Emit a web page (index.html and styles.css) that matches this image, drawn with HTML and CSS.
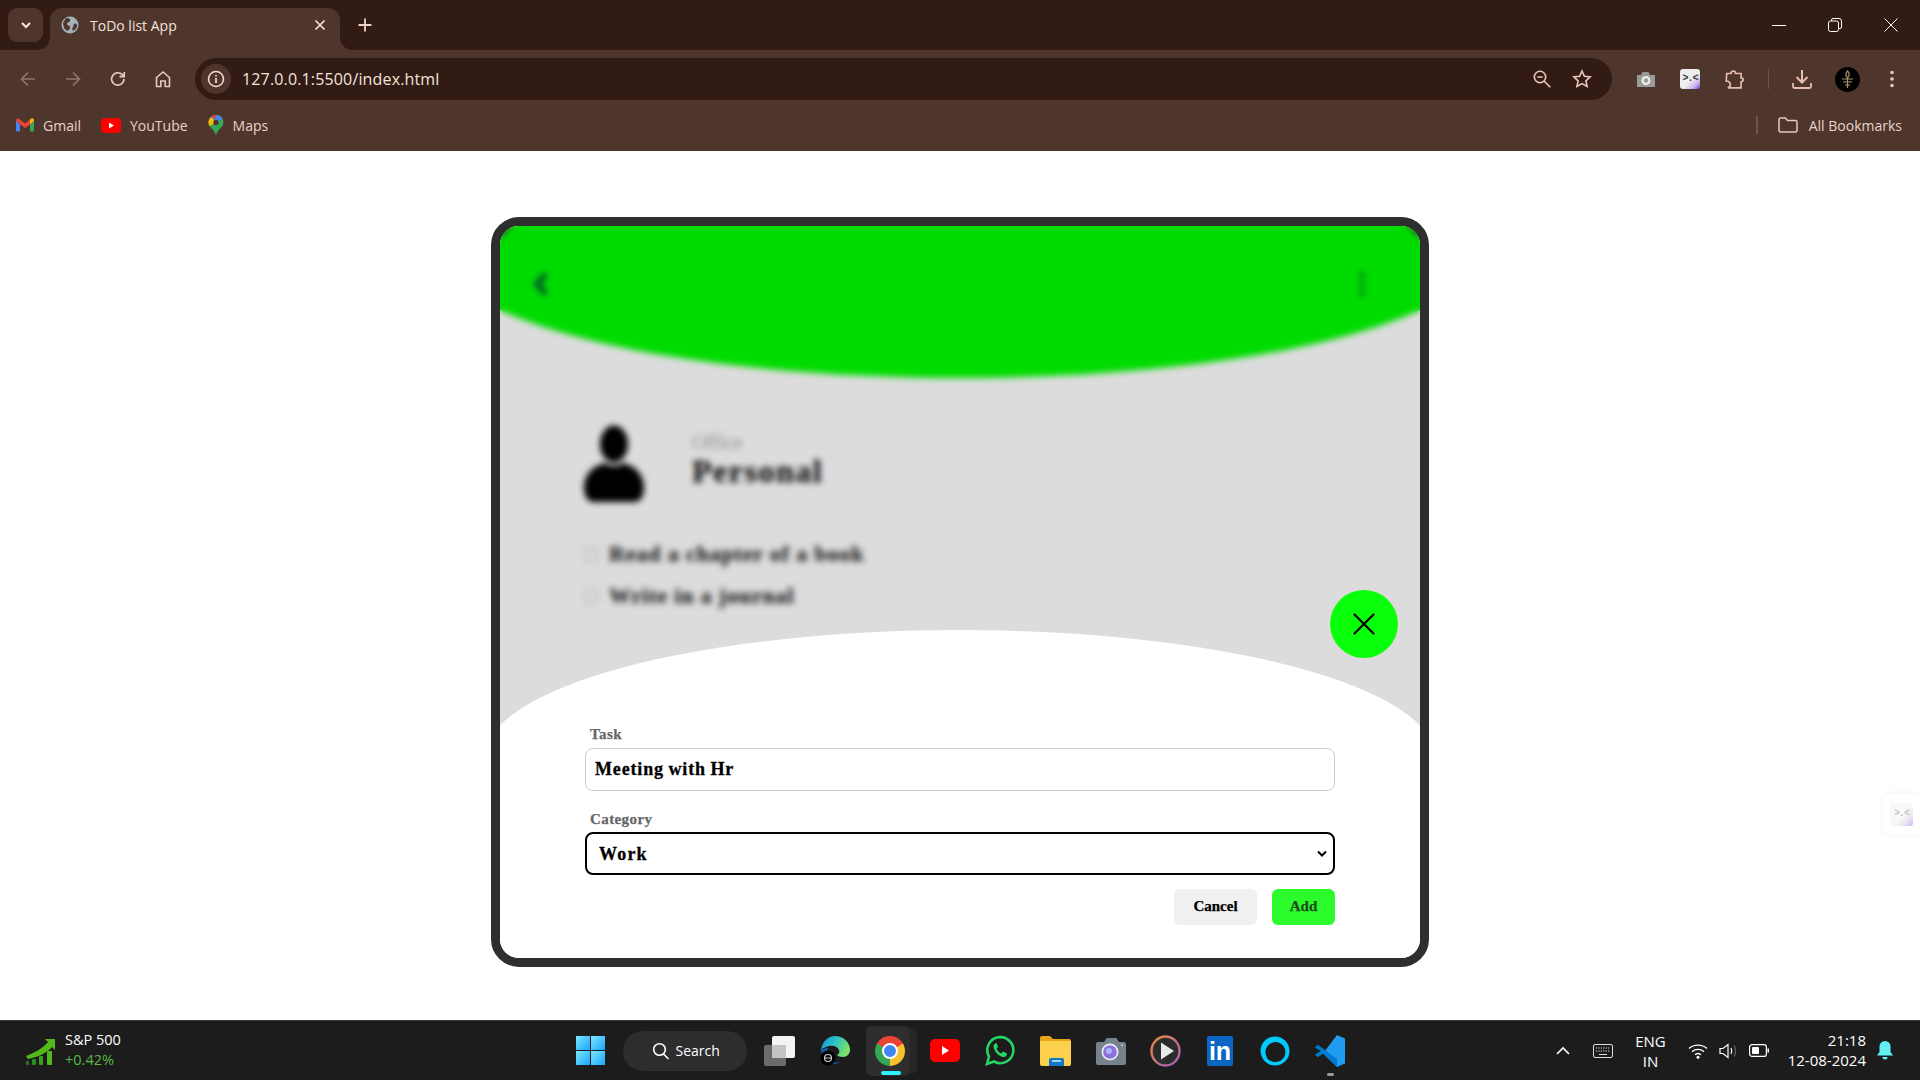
FILE: index.html
```html
<!DOCTYPE html>
<html lang="en">
<head>
<meta charset="UTF-8">
<title>ToDo list App</title>
<link rel="stylesheet" href="styles.css">
</head>
<body>
<div class="browser">
	<div class="tabstrip">
		<div class="tabsearch"><svg width="14" height="14" viewBox="0 0 14 14"><path d="M3 5l4 4 4-4" fill="none" stroke="#f6e6df" stroke-width="2"/></svg></div>
		<div class="tab">
			<svg width="18" height="18" viewBox="0 0 18 18"><circle cx="9" cy="9" r="8.5" fill="#a3b1bb"/><path d="M5 2c3 0 5 1 4 3S6 6 6 8s3 1 3 3-1 3-3 4L3 12 2 7zM13 8c2-1 3 0 3 2s-2 4-4 5c-1-2-1-3 0-4s0-2 1-3z" fill="#4f362d"/></svg>
			<span class="tab-title">ToDo list App</span>
			<svg class="tab-close" width="12" height="12" viewBox="0 0 12 12"><path d="M1.5 1.5l9 9M10.5 1.5l-9 9" stroke="#f6e6df" stroke-width="1.6"/></svg>
		</div>
		<svg class="newtab" width="16" height="16" viewBox="0 0 16 16"><path d="M8 1.5v13M1.5 8h13" stroke="#f0d3c7" stroke-width="1.8"/></svg>
		<div class="wincontrols">
			<svg width="14" height="14" viewBox="0 0 14 14"><path d="M0 7.5h14" stroke="#fff"/></svg>
			<svg width="14" height="14" viewBox="0 0 14 14"><rect x=".5" y="3" width="10" height="10.5" rx="2" fill="none" stroke="#fff"/><path d="M3.5 3V2a1.5 1.5 0 0 1 1.5-1.5h6A2.5 2.5 0 0 1 13.500 3v6a1.500 1.500 0 0 1-1.500 1.500h-1" fill="none" stroke="#fff"/></svg>
			<svg width="14" height="14" viewBox="0 0 14 14"><path d="M.5.5l13 13M13.500.5l-13 13" stroke="#fff"/></svg>
		</div>
	</div>
	<div class="toolbar">
		<div class="navrow">
			<svg class="nav-icon" width="20" height="20" viewBox="0 0 20 20"><path d="M17 10H4M10 3.500L3.500 10l6.500 6.500" fill="none" stroke="#8f756b" stroke-width="1.700"/></svg>
			<svg class="nav-icon" width="20" height="20" viewBox="0 0 20 20"><path d="M3 10h13M10 3.500l6.500 6.500-6.500 6.500" fill="none" stroke="#8f756b" stroke-width="1.700"/></svg>
			<svg class="nav-icon" width="20" height="20" viewBox="0 0 20 20"><path d="M16 10a6.200 6.200 0 1 1-1.800-4.400L16 7.500M16.200 3v4.700h-4.700" fill="none" stroke="#e8c9bc" stroke-width="1.700"/></svg>
			<svg class="nav-icon" width="20" height="20" viewBox="0 0 20 20"><path d="M3.500 17.500V8.500L10 3l6.500 5.500v9h-4.300v-5.500H7.800v5.500z" fill="none" stroke="#e8c9bc" stroke-width="1.600"/></svg>
			<div class="omnibox">
				<div class="infochip"><svg width="18" height="18" viewBox="0 0 18 18"><circle cx="9" cy="9" r="7.500" fill="none" stroke="#f3dcd2" stroke-width="1.500"/><path d="M9 8v5M9 5v1.600" stroke="#f3dcd2" stroke-width="1.700"/></svg></div>
				<span class="url">127.0.0.1:5500/index.html</span>
				<svg class="omni-icon" width="20" height="20" viewBox="0 0 20 20"><circle cx="8" cy="8" r="5.700" fill="none" stroke="#e8c9bc" stroke-width="1.600"/><path d="M5.300 8h5.400M12.300 12.300l6 6" stroke="#e8c9bc" stroke-width="1.600"/></svg>
				<svg class="omni-icon" width="20" height="20" viewBox="0 0 20 20"><path d="M10 2l2.400 5.300 5.800.6-4.300 3.900 1.200 5.700-5.100-2.900-5.100 2.900 1.200-5.700L1.800 7.900l5.800-.6z" fill="none" stroke="#e8c9bc" stroke-width="1.600"/></svg>
			</div>
			<div class="extensions">
				<svg width="20" height="20" viewBox="0 0 20 20"><path d="M1 6h4l1.500-3h6L14 6h5v12H1z" fill="#9a9a9a"/><circle cx="10" cy="11.500" r="4.500" fill="#eee"/><circle cx="10" cy="11.500" r="2.300" fill="#9a9a9a"/></svg>
				<div class="ext-face">&gt;.&lt;</div>
				<svg width="22" height="22" viewBox="0 0 20 20"><path d="M2.500 5h4c0-3 4-3 4 0h5v4c2.500 0 2.500 3.500 0 3.500v5.500H3.500c3-1 3-5 0-6H2z" fill="none" stroke="#e8bdae" stroke-width="1.500"/></svg>
				<span class="toolbar-sep"></span>
				<svg width="22" height="22" viewBox="0 0 22 22"><path d="M11 2v12M5.500 9l5.500 5.500L16.500 9" fill="none" stroke="#e8bdae" stroke-width="2"/><path d="M2 15v3.500a1.500 1.500 0 0 0 1.500 1.500h15a1.500 1.500 0 0 0 1.500-1.500V15" fill="none" stroke="#e8bdae" stroke-width="1.800"/></svg>
				<div class="avatar"><svg width="25" height="25" viewBox="0 0 25 25"><path d="M12.500 4c2 2 2 4 1 6h-2c-1-2-1-4 1-6zM7 12h11M8 15h9M10 18h5M12.500 10v11" fill="none" stroke="#a8946a" stroke-width="1.200"/></svg></div>
				<svg class="kebab" width="6" height="20" viewBox="0 0 6 20"><circle cx="3" cy="3.500" r="1.800" fill="#e8c9bc"/><circle cx="3" cy="10" r="1.800" fill="#e8c9bc"/><circle cx="3" cy="16.500" r="1.800" fill="#e8c9bc"/></svg>
			</div>
		</div>
		<div class="bookmarks">
			<a class="bookmark">
				<svg width="18" height="14" viewBox="0 0 18 14"><path d="M0 2.500V12a1.500 1.500 0 0 0 1.500 1.500H4V6.500z" fill="#4285f4"/><path d="M14 6.500v7h2.500A1.500 1.500 0 0 0 18 12V2.500z" fill="#34a853"/><path d="M0 2.500C0 .5 2 0 3.200 1L9 5.500 14.800 1C16 0 18 .5 18 2.500L14 6.500 9 10 4 6.500z" fill="#ea4335"/><path d="M14 6.500L18 2.500C18 .5 16 0 14.800 1L14 1.600z" fill="#fbbc04"/></svg>
				<span>Gmail</span>
			</a>
			<a class="bookmark">
				<svg width="20" height="15" viewBox="0 0 20 15"><rect width="20" height="15" rx="4" fill="#f00"/><path d="M8 4.500v6l5-3z" fill="#fff"/></svg>
				<span>YouTube</span>
			</a>
			<a class="bookmark">
				<svg width="16" height="20" viewBox="0 0 16 20"><path d="M8 0a7.500 7.500 0 0 1 7.500 7.500C15.500 12 10 14 8 20 6 14 .5 12 .5 7.500A7.500 7.500 0 0 1 8 0z" fill="#34a853"/><path d="M8 0a7.500 7.500 0 0 1 6.500 3.700L8 7.500 3 2z" fill="#4285f4"/><path d="M3 2L8 7.500 1.500 11A7 7 0 0 1 3 2z" fill="#fbbc04"/><path d="M3 2a7.500 7.500 0 0 1 5-2L8 4z" fill="#ea4335"/><circle cx="8" cy="7.500" r="2.700" fill="#4f362d"/></svg>
				<span>Maps</span>
			</a>
			<span class="bookmarks-sep"></span>
			<a class="bookmark allmarks">
				<svg width="20" height="16" viewBox="0 0 20 16"><path d="M1 13.500V2.500A1.500 1.500 0 0 1 2.500 1h5l2 2.500h8A1.500 1.500 0 0 1 19 5v8.500a1.500 1.500 0 0 1-1.500 1.500h-15A1.500 1.500 0 0 1 1 13.500z" fill="none" stroke="#e8c9bc" stroke-width="1.500"/></svg>
				<span>All Bookmarks</span>
			</a>
		</div>
	</div>
</div>

<div class="page">
	<div class="phone">
		<div class="screen">
			<div class="header">
				<svg width="18" height="26" viewBox="0 0 18 26"><path d="M14 3L5 13l9 10" fill="none" stroke="#063" stroke-width="6"/></svg>
				<svg width="6" height="26" viewBox="0 0 6 26"><circle cx="3" cy="4" r="2.500" fill="#063"/><circle cx="3" cy="13" r="2.500" fill="#063"/><circle cx="3" cy="22" r="2.500" fill="#063"/></svg>
			</div>
			<div class="profile">
				<svg width="64" height="80" viewBox="0 0 64 80"><ellipse cx="32" cy="20" rx="14" ry="18.500" fill="#000"/><path d="M23 39c3 4 15 4 18 0 11 3 21 10 21 25 0 8-4 14-9 14H11C6 78 2 72 2 64c0-15 10-22 21-25z" fill="#000"/></svg>
				<div class="profile-text">
					<span class="profile-small">Office</span>
					<span class="profile-name">Personal</span>
				</div>
			</div>
			<ul class="tasks">
				<li><span class="checkbox"></span>Read a chapter of a book</li>
				<li><span class="checkbox"></span>Write in a journal</li>
			</ul>
		</div>
		<div class="overlay"></div>
		<button class="fab"><svg width="22" height="22" viewBox="0 0 22 22"><path d="M1.500 1.500l19 19M20.500 1.500l-19 19" stroke="#000" stroke-width="2.200" stroke-linecap="round"/></svg></button>
		<div class="sheet">
			<div class="sheet-cap"></div>
			<form class="sheet-form">
				<div class="field">
					<label>Task</label>
					<input type="text" value="Meeting with Hr">
				</div>
				<div class="field">
					<label>Category</label>
					<select><option>Work</option><option>Personal</option></select>
				</div>
				<div class="actions">
					<button type="button" class="btn-cancel">Cancel</button>
					<button type="button" class="btn-add">Add</button>
				</div>
			</form>
		</div>
	</div>
	<div class="sidetab"><div class="ext-face ext-face-side">&gt;.&lt;</div></div>
</div>

<div class="taskbar">
	<div class="tb-left">
		<svg width="30" height="28" viewBox="0 0 30 28"><path d="M1 19C9 16 17 12 23 5l-3-3h10v11l-3-3C21 17 12 20 3 22z" fill="#52b81c"/><rect x="1" y="24" width="3" height="4" rx="1" fill="#1f7a1f"/><rect x="7" y="22" width="4" height="6" rx="1" fill="#2a8f20"/><rect x="14" y="19" width="4" height="9" rx="1" fill="#3aa020"/><rect x="22" y="14" width="5" height="14" rx="1" fill="#52b81c"/></svg>
		<div class="stock">
			<span>S&amp;P 500</span>
			<span class="stock-up">+0.42%</span>
		</div>
	</div>
	<div class="tb-center">
		<div class="slot"><div class="winlogo"><i></i><i></i><i></i><i></i></div></div>
		<div class="searchpill">
			<svg width="18" height="18" viewBox="0 0 18 18"><circle cx="7.500" cy="7.500" r="5.800" fill="none" stroke="#fff" stroke-width="1.600"/><path d="M11.500 12l5 5" stroke="#fff" stroke-width="1.600"/></svg>
			<span>Search</span>
		</div>
		<div class="slot"><svg width="32" height="30" viewBox="0 0 32 30"><rect x="0" y="9" width="22" height="21" rx="2" fill="#6b6b6b"/><rect x="8" y="0" width="23" height="22" rx="2" fill="#f4f4f4"/><rect x="8" y="9" width="14" height="13" fill="#c4c4c4"/></svg></div>
		<div class="slot"><svg width="30" height="30" viewBox="0 0 30 30"><defs><linearGradient id="edge" x1="0" y1="0" x2="1" y2=".4"><stop offset="0" stop-color="#0f8fd8"/><stop offset=".55" stop-color="#2fc4c0"/><stop offset="1" stop-color="#7be06c"/></linearGradient></defs><path d="M1 14C2 6 8 0 15 0c8 0 15 6 15 14 0 4-3 7-7 7-3 0-5-1-6-2 2-1 3-3 2-5-2-5-9-5-13-3-3 1-4 2-6 3z" fill="url(#edge)"/><path d="M9 12c-4 3-3 10 2 13 3 2 8 2 11 0-8 6-20 3-21-11 2-1 4-2 8-2z" fill="#0f5fb4"/><circle cx="8" cy="22" r="7.500" fill="#000"/><circle cx="8" cy="22" r="3.500" fill="none" stroke="#ccc" stroke-width="1.200"/><path d="M4.500 22h7" stroke="#ccc"/></svg></div>
		<div class="slot slot-active"><div class="chromelogo"></div><span class="active-bar"></span></div>
		<div class="slot"><svg width="30" height="24" viewBox="0 0 30 24"><rect width="30" height="23" rx="5" fill="#f00"/><path d="M12 7v9l7-4.500z" fill="#fff"/></svg></div>
		<div class="slot"><svg width="32" height="32" viewBox="0 0 32 32"><path d="M3 29l2-7.500a13 13 0 1 1 5 5z" fill="none" stroke="#25d366" stroke-width="2.600"/><path d="M11 8.500c-2 1.500-2 4 0 7.500 2.500 4 6 6 9 6 2 0 3-2 3-3.500l-4-2-1.700 2c-2-.8-3.800-2.600-4.800-5l1.600-1.500-1.500-4z" fill="#25d366"/></svg></div>
		<div class="slot"><svg width="31" height="30" viewBox="0 0 31 30"><path d="M0 2a2 2 0 0 1 2-2h8l3 3h16a2 2 0 0 1 2 2v4H0z" fill="#e8a317"/><path d="M0 5h31v23a2 2 0 0 1-2 2H2a2 2 0 0 1-2-2z" fill="#fdd04e"/><path d="M9 30v-6a2 2 0 0 1 2-2h11a2 2 0 0 1 2 2v6z" fill="#0f78c8"/><rect x="12" y="24" width="9" height="2" fill="#9fd4f5"/></svg></div>
		<div class="slot"><svg width="31" height="28" viewBox="0 0 31 28"><path d="M1 7a2 2 0 0 1 2-2h6l2-3a2 2 0 0 1 1.500-1h7A2 2 0 0 1 22 2l2 3h5a2 2 0 0 1 2 2v19a2 2 0 0 1-2 2H3a2 2 0 0 1-2-2z" fill="#76828c"/><circle cx="15" cy="15" r="8.500" fill="#e8eef4"/><circle cx="15" cy="15" r="6.800" fill="#8d6fe0"/><circle cx="14" cy="14" r="3" fill="#a9b9f4"/><circle cx="27" cy="8" r="1" fill="#ccc"/></svg></div>
		<div class="slot"><svg width="31" height="32" viewBox="0 0 31 32"><defs><linearGradient id="mp" x1="0" y1="0" x2="1" y2="1"><stop offset="0" stop-color="#f08a3c"/><stop offset="1" stop-color="#9b5fc0"/></linearGradient></defs><ellipse cx="15.500" cy="16" rx="14" ry="14.500" fill="#2b2b2b" stroke="url(#mp)" stroke-width="2.400"/><path d="M11 7.500v17l13-8.500z" fill="#e8e8e8"/></svg></div>
		<div class="slot"><div class="linkedin">in</div></div>
		<div class="slot"><svg width="32" height="32" viewBox="0 0 32 32"><path d="M16 1.500a14.500 14.500 0 0 1 0 29c-2 0-3.800-.4-5.500-1.100L8.500 24c1.500 1 2.300 1.600 3.300 1.900A10 10 0 1 0 6.500 18c.3 2 1 3.600 2 6l2 5.400A14.500 14.500 0 0 1 16 1.500z" fill="#00caff"/></svg></div>
		<div class="slot"><svg width="30" height="32" viewBox="0 0 30 32"><path d="M22 0l8 3.500v25L22 32 8 18.500z" fill="#1f9cf0"/><path d="M22 0v8L11 16 3 10l-3 2.500L6.500 16 0 19.500 3 22l19-14z" fill="#0065a9"/><path d="M0 12.500L3 10 22 24v8L8 18.500 3 22l-3-2.500L6 16z" fill="#007acc"/></svg><span class="running-dot"></span></div>
	</div>
	<div class="tb-right">
		<svg class="tray-up" width="14" height="9" viewBox="0 0 14 9"><path d="M1 8l6-6 6 6" fill="none" stroke="#fff" stroke-width="1.600"/></svg>
		<svg class="tray-kbd" width="20" height="14" viewBox="0 0 20 14"><rect x=".5" y=".5" width="19" height="13" rx="1.500" fill="none" stroke="#ddd"/><path d="M3 4h14M3 7h14" stroke="#ddd" stroke-dasharray="1.200 1.200"/><path d="M6 10.500h8" stroke="#ddd"/></svg>
		<div class="lang"><span>ENG</span><span>IN</span></div>
		<svg class="tray-wifi" width="20" height="16" viewBox="0 0 20 16"><path d="M1 5.500c5-4.500 13-4.500 18 0M4 8.700c3.500-3 8.500-3 12 0M7 11.700c1.800-1.400 4.200-1.400 6 0" fill="none" stroke="#fff" stroke-width="1.300"/><circle cx="10" cy="14.300" r="1.500" fill="#fff"/></svg>
		<svg class="tray-vol" width="20" height="18" viewBox="0 0 20 18"><path d="M1 6.500h3L9 2.500v13L4 11.500H1z" fill="none" stroke="#fff" stroke-width="1.200"/><path d="M12 6c1 2 1 4 0 6" fill="none" stroke="#fff" stroke-width="1.200"/><path d="M15 3.500c2 3.500 2 7.500 0 11" fill="none" stroke="#666" stroke-width="1.200"/></svg>
		<svg class="tray-bat" width="20" height="13" viewBox="0 0 20 13"><rect x=".6" y=".6" width="16.800" height="11.800" rx="2.500" fill="none" stroke="#fff" stroke-width="1.200"/><rect x="3" y="3" width="7" height="7" rx="1" fill="#fff"/><rect x="18.500" y="4.500" width="1.500" height="4" fill="#fff"/></svg>
		<div class="clock"><span>21:18</span><span>12-08-2024</span></div>
		<svg class="tray-bell" width="16" height="19" viewBox="0 0 16 19"><path d="M8 0a5.500 5.500 0 0 1 5.500 5.500V11L16 14.500H0L2.500 11V5.500A5.500 5.500 0 0 1 8 0z" fill="#62f0f5"/><path d="M5.500 16h5a2.500 2.500 0 0 1-5 0z" fill="#62f0f5"/></svg>
	</div>
</div>
</body>
</html>
```

FILE: styles.css
```css
* {
	box-sizing: border-box;
}

html,
body {
	margin: 0;
	padding: 0;
	height: 100%;
}

body {
	display: flex;
	flex-direction: column;
	height: 1080px;
	overflow: hidden;
	background: #fff;
	font-family: "Open Sans", "Liberation Sans", sans-serif;
}

svg {
	display: block;
	flex-shrink: 0;
}

/* browser chrome */
.tabstrip {
	display: flex;
	align-items: flex-end;
	height: 50px;
	background: #311b14;
	padding-left: 8px;
}

.tabsearch {
	display: flex;
	align-items: center;
	justify-content: center;
	width: 35px;
	height: 34px;
	margin-bottom: 8px;
	border-radius: 9px;
	background: #4f362d;
}

.tab {
	position: relative;
	display: flex;
	align-items: center;
	width: 290px;
	height: 42px;
	margin-left: 7px;
	padding: 0 14px 8px 11px;
	border-radius: 12px 12px 0 0;
	background: #4f362d;
}

.tab::before,
.tab::after {
	content: "";
	position: absolute;
	bottom: 0;
	width: 12px;
	height: 12px;
}

.tab::before {
	left: -12px;
	background: radial-gradient(circle at 0 0, transparent 11.500px, #4f362d 12px);
}

.tab::after {
	right: -12px;
	background: radial-gradient(circle at 100% 0, transparent 11.500px, #4f362d 12px);
}

.tab-title {
	flex: 1;
	margin-left: 11px;
	font-size: 14px;
	color: #f3e3dc;
}

.newtab {
	margin: 0 0 17px 17px;
}

.wincontrols {
	display: flex;
	gap: 42px;
	margin: 0 22px 18px auto;
}

.toolbar {
	height: 101px;
	background: #4f362d;
}

.navrow {
	display: flex;
	align-items: center;
	height: 58px;
	padding-left: 18px;
}

.nav-icon {
	margin-right: 25px;
}

.omnibox {
	display: flex;
	align-items: center;
	gap: 20px;
	width: 1417px;
	height: 42px;
	margin-left: -3px;
	padding: 0 20px 0 6px;
	border-radius: 21px;
	background: #311b14;
}

.infochip {
	display: flex;
	align-items: center;
	justify-content: center;
	width: 30px;
	height: 30px;
	border-radius: 50%;
	background: #4f362d;
}

.url {
	flex: 1;
	margin-left: -9px;
	font-size: 16px;
	letter-spacing: .15px;
	color: #f3e3dc;
}

.extensions {
	display: flex;
	align-items: center;
	gap: 24px;
	margin-left: 24px;
}

.ext-face {
	width: 20px;
	height: 20px;
	border-radius: 3px;
	background: linear-gradient(135deg, #eee 55%, #c9b4e8 80%, #7a3fd0);
	font: bold 10px/19px "Liberation Mono", monospace;
	letter-spacing: -1px;
	text-align: center;
	color: #333;
}

.toolbar-sep {
	width: 1px;
	height: 20px;
	margin: 0 -2px;
	background: #6d5449;
}

.avatar {
	width: 25px;
	height: 25px;
	margin: 0 -2px;
	border-radius: 50%;
	background: #000;
}

.kebab {
	margin-left: 7px;
}

.bookmarks {
	display: flex;
	align-items: center;
	height: 34px;
	padding: 0 18px 0 16px;
	font-size: 14px;
	color: #e6d2c9;
}

.bookmark {
	display: flex;
	align-items: center;
	gap: 9px;
	margin-right: 20px;
}

.bookmarks-sep {
	width: 2px;
	height: 18px;
	margin-left: auto;
	background: #6d5449;
}

.allmarks {
	gap: 11px;
	margin: 0 0 0 20px;
}

/* page area */
.page {
	position: relative;
	flex: 1;
	padding-top: 66px;
}

.phone {
	position: relative;
	width: 938px;
	height: 750px;
	margin: 0 auto;
	border: 9px solid #2e2e2e;
	border-radius: 28px;
	overflow: hidden;
	background: #fff;
	font-family: "Liberation Serif", serif;
}

.screen {
	height: 100%;
}

.header {
	display: flex;
	align-items: center;
	justify-content: space-between;
	height: 152px;
	padding: 0 55px 36px 32px;
	background: #00ff00;
	clip-path: ellipse(520px 127px at 50% 25px);
}

.profile {
	display: flex;
	align-items: center;
	gap: 46px;
	margin-top: 46px;
	padding-left: 82px;
}

.profile-text {
	display: flex;
	flex-direction: column;
	padding-bottom: 9px;
}

.profile-small {
	margin-top: 3px;
	font-size: 20px;
	line-height: 21px;
	color: #aaa;
}

.profile-name {
	font-size: 32px;
	font-weight: bold;
	letter-spacing: 1.500px;
	-webkit-text-stroke: .3px #111;
	color: #111;
}

.tasks {
	margin: 29px 0 0;
	padding: 0 0 0 85px;
	list-style: none;
}

.tasks li {
	display: flex;
	align-items: center;
	gap: 11px;
	height: 42px;
	font-size: 22px;
	font-weight: bold;
	letter-spacing: .85px;
	-webkit-text-stroke: .3px #222;
	color: #222;
}

.checkbox {
	width: 13px;
	height: 13px;
	border: 1px solid #bbb;
	background: #fff;
}

.overlay {
	position: absolute;
	inset: 0;
	background: rgba(0, 0, 0, .137);
	backdrop-filter: blur(3px);
}

.fab {
	position: absolute;
	top: 364px;
	left: 830px;
	display: flex;
	align-items: center;
	justify-content: center;
	width: 68px;
	height: 68px;
	padding: 0;
	border: none;
	border-radius: 50%;
	background: #0aff0a;
}

.sheet {
	position: absolute;
	left: 0;
	right: 0;
	bottom: 0;
}

.sheet-cap {
	height: 96px;
	background: #fff;
	clip-path: ellipse(475px 127px at 50% 128px);
}

.sheet-form {
	height: 233px;
	padding: 0 85px;
	background: #fff;
}

.field + .field {
	margin-top: 18px;
}

.field + .field label {
	position: relative;
	top: 1px;
}

.field label {
	display: block;
	height: 18px;
	margin: 0 0 5px 5px;
	font-size: 15px;
	font-weight: bold;
	line-height: 18px;
	letter-spacing: .4px;
	-webkit-text-stroke: .25px #666;
	color: #666;
}

.field input,
.field select {
	display: block;
	width: 100%;
	height: 43px;
	font-family: "Liberation Serif", serif;
	font-size: 18px;
	font-weight: bold;
	letter-spacing: .85px;
	word-spacing: -.8px;
	-webkit-text-stroke: .3px #000;
	color: #000;
	background: #fff;
	outline: none;
}

.field input {
	padding: 0 9px;
	border: 1px solid #ccc;
	border-radius: 8px;
}

.field select {
	appearance: none;
	padding: 0 12px;
	border: 2px solid #000;
	border-radius: 8px;
	letter-spacing: 1.200px;
	background: #fff url("data:image/svg+xml,%3Csvg xmlns='http://www.w3.org/2000/svg' width='10' height='7' viewBox='0 0 10 7'%3E%3Cpath d='M1 1.500l4 4 4-4' fill='none' stroke='%23000' stroke-width='2'/%3E%3C/svg%3E") no-repeat right 6px center;
}

.actions {
	display: flex;
	justify-content: flex-end;
	gap: 15px;
	margin-top: 14px;
}

.actions button {
	height: 36px;
	padding: 0 0 2px;
	border: none;
	border-radius: 6px;
	font-family: "Liberation Serif", serif;
	font-size: 15px;
	font-weight: bold;
	-webkit-text-stroke: .25px;
}

.btn-cancel {
	width: 83px;
	background: #f0f0f0;
	color: #000;
}

.btn-add {
	width: 63px;
	background: #2cfc2c;
	color: #1a4d1a;
}

.sidetab {
	position: absolute;
	top: 643px;
	right: 0;
	padding: 9px 7px 9px 7px;
	border-radius: 8px 0 0 8px;
	background: #fff;
	box-shadow: 0 0 6px rgba(0, 0, 0, .06);
}

.ext-face-side {
	width: 23px;
	height: 23px;
	line-height: 22px;
	opacity: .4;
	color: #666;
}

/* windows taskbar */
.taskbar {
	display: grid;
	grid-template-columns: 1fr auto 1fr;
	align-items: center;
	height: 60px;
	border-top: 1px solid #3d3d3d;
	background: #1c1c1c;
	font-size: 15px;
	color: #fff;
}

.tb-left {
	display: flex;
	align-items: center;
	gap: 10px;
	padding-left: 25px;
}

.stock {
	display: flex;
	flex-direction: column;
	margin-top: -1px;
	font-size: 14.500px;
	line-height: 20px;
}

.stock-up {
	color: #58b947;
}

.tb-center {
	display: flex;
	align-items: center;
	font-size: 14px;
}

.slot {
	position: relative;
	display: flex;
	align-items: center;
	justify-content: center;
	width: 55px;
	height: 50px;
}

.slot-active {
	width: 44px;
	margin: 0 8px 0 3px;
	padding-left: 5px;
	border-radius: 6px;
	background: #2e2e2e;
}

.slot-active::before {
	content: "";
	position: absolute;
	top: 2px;
	bottom: 2px;
	left: 100%;
	width: 7px;
	border-radius: 0 6px 6px 0;
	background: #262626;
}

.active-bar {
	position: absolute;
	bottom: 1px;
	left: 15px;
	width: 20px;
	height: 4px;
	border-radius: 2px;
	background: #2ff0ff;
}

.running-dot {
	position: absolute;
	bottom: 0;
	left: 24px;
	width: 7px;
	height: 3px;
	border-radius: 2px;
	background: #9a9a9a;
}

.winlogo {
	display: grid;
	grid-template-columns: 14px 14px;
	grid-template-rows: 14px 14px;
	gap: 1px;
}

.winlogo i {
	background: linear-gradient(135deg, #7de8ff, #1aa5ff);
}

.searchpill {
	display: flex;
	align-items: center;
	gap: 6px;
	width: 124px;
	height: 40px;
	margin: 0 6px 0 5px;
	padding-left: 29px;
	border-radius: 20px;
	background: #2d2d2d;
}

.chromelogo {
	position: relative;
	flex-shrink: 0;
	width: 30px;
	height: 30px;
	border-radius: 50%;
	background: conic-gradient(#ea4335 60deg, #fbc02d 60deg 180deg, #34a853 180deg 300deg, #ea4335 300deg);
}

.chromelogo::after {
	content: "";
	position: absolute;
	inset: 7px;
	border: 2.500px solid #fff;
	border-radius: 50%;
	background: #4285f4;
}

.linkedin {
	width: 26px;
	height: 30px;
	border-radius: 2px;
	background: #0a66c2;
	font: bold 25px/30px "Liberation Sans", sans-serif;
	text-align: center;
	color: #fff;
}

.tb-right {
	display: flex;
	align-items: center;
	justify-self: end;
}

.tray-up {
	margin-right: 23px;
}

.tray-kbd {
	margin-right: 22px;
}

.lang {
	display: flex;
	flex-direction: column;
	align-items: center;
	margin-right: 22px;
	line-height: 20px;
}

.tray-vol {
	margin-left: 11px;
}

.tray-bat {
	margin-left: 10px;
}

.clock {
	display: flex;
	flex-direction: column;
	align-items: flex-end;
	margin-top: -2px;
	margin-left: 19px;
	line-height: 20px;
}

.tray-bell {
	margin: 0 27px 0 11px;
}
```
